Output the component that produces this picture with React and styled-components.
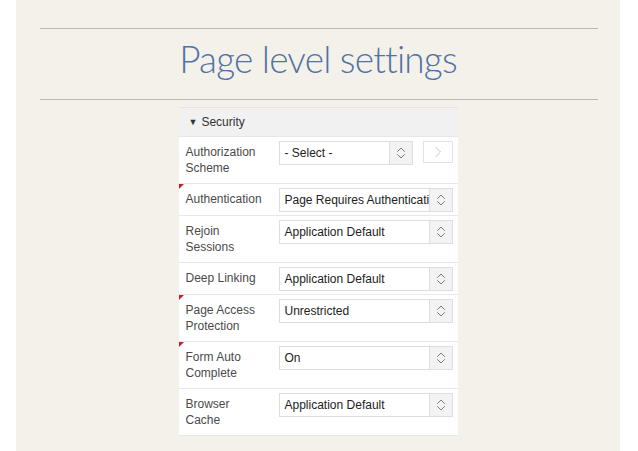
import React from "react";
import styled, { createGlobalStyle } from "styled-components";

const Global = createGlobalStyle`
  html, body { margin: 0; padding: 0; background: #ffffff; }
  body { width: 638px; height: 451px; overflow: hidden; }
`;

const Slide = styled.div`
  margin-left: 16px;
  width: 604px;
  height: 451px;
  background: #f4f1eb;
  display: flex;
  flex-direction: column;
  align-items: center;
  padding-top: 28px;
  box-sizing: border-box;
`;

const Rule = styled.div`
  align-self: flex-start;
  margin-left: 24px;
  width: 558px;
  height: 1px;
  background: #bdb9b1;
`;

const Title = styled.h1`
  margin: 0;
  height: 70px;
  display: flex;
  align-items: center;
  justify-content: center;
  font-family: "Lato", "Liberation Sans", sans-serif;
  font-weight: 300;
  font-size: 37px;
  letter-spacing: -0.8px;
  color: #5173a3;
  padding-bottom: 11px;
  box-sizing: border-box;
`;

const Panel = styled.div`
  margin-top: 7px;
  width: 279px;
  background: #ffffff;
  font-family: "Liberation Sans", Arial, sans-serif;
  font-size: 12px;
`;

const Header = styled.div`
  height: 28px;
  display: flex;
  align-items: center;
  padding-left: 10px;
  background: #f1f1f1;
  border-top: 1px solid #e4e4e4;
  border-bottom: 1px solid #e6e6e6;
  color: #333;
  gap: 4px;
`;

const Caret = styled.span`
  font-size: 9px;
  color: #333;
`;

const Row = styled.div`
  position: relative;
  display: grid;
  grid-template-columns: 93px minmax(0, 1fr);
  padding: 4px 5px 3px 7px;
  border-bottom: 1px solid #e8e8e8;
  &::before {
    content: "";
    display: ${(p) => (p.$required ? "block" : "none")};
    position: absolute;
    left: 0;
    top: 0;
    border-top: 5px solid #c8202a;
    border-right: 5px solid transparent;
  }
`;

const Label = styled.div`
  padding: 3px 0 4px;
  line-height: 16px;
  color: #4a4a4a;
`;

const Controls = styled.div`
  display: flex;
  align-items: flex-start;
  gap: 10px;
  min-width: 0;
`;

const Select = styled.div`
  flex: ${(p) => (p.$width ? `0 0 ${p.$width}px` : "1 1 0")};
  height: 24px;
  display: flex;
  border: 1px solid #dedede;
  box-sizing: border-box;
  background: #fff;
  min-width: 0;
`;

const Value = styled.div`
  flex: 1;
  min-width: 0;
  padding-left: 5px;
  line-height: 22px;
  font-size: 12px;
  color: #222;
  white-space: nowrap;
  overflow: hidden;
`;

const Spinner = styled.div`
  flex: 0 0 22px;
  display: flex;
  align-items: center;
  justify-content: center;
  background: #f3f3f3;
  border-left: 1px solid #dedede;
`;

const NavButton = styled.div`
  width: 30px;
  height: 22px;
  display: flex;
  align-items: center;
  justify-content: center;
  border: 1px solid #e2e2e2;
  box-sizing: border-box;
  background: #fff;
`;

const UpDown = () => (
  <svg width="10" height="14" viewBox="0 0 10 14" fill="none" stroke="#808080" strokeWidth="1" strokeLinecap="round" strokeLinejoin="round">
    <path d="M1.5 5.5 L5 2 L8.5 5.5" />
    <path d="M1.5 8.5 L5 12 L8.5 8.5" />
  </svg>
);

const RightChevron = () => (
  <svg width="8" height="12" viewBox="0 0 8 12" fill="none" stroke="#c4c4c4" strokeWidth="1" strokeLinecap="round" strokeLinejoin="round">
    <path d="M2 1.5 L6.5 6 L2 10.5" />
  </svg>
);

const rows = [
  { label: ["Authorization", "Scheme"], value: "- Select -", nav: true },
  { label: ["Authentication"], value: "Page Requires Authenticati", required: true },
  { label: ["Rejoin", "Sessions"], value: "Application Default" },
  { label: ["Deep Linking"], value: "Application Default" },
  { label: ["Page Access", "Protection"], value: "Unrestricted", required: true },
  { label: ["Form Auto", "Complete"], value: "On", required: true },
  { label: ["Browser", "Cache"], value: "Application Default" },
];

export default function App() {
  return (
    <>
      <Global />
      <Slide>
        <Rule />
        <Title>Page level settings</Title>
        <Rule />
        <Panel>
          <Header>
            <Caret>▼</Caret>
            <span>Security</span>
          </Header>
          {rows.map((r, i) => (
            <Row key={i} $required={r.required}>
              <Label>
                {r.label.map((l, j) => (
                  <div key={j}>{l}</div>
                ))}
              </Label>
              <Controls>
                <Select $width={r.nav ? 134 : 0}>
                  <Value>{r.value}</Value>
                  <Spinner>
                    <UpDown />
                  </Spinner>
                </Select>
                {r.nav && (
                  <NavButton>
                    <RightChevron />
                  </NavButton>
                )}
              </Controls>
            </Row>
          ))}
        </Panel>
      </Slide>
    </>
  );
}
